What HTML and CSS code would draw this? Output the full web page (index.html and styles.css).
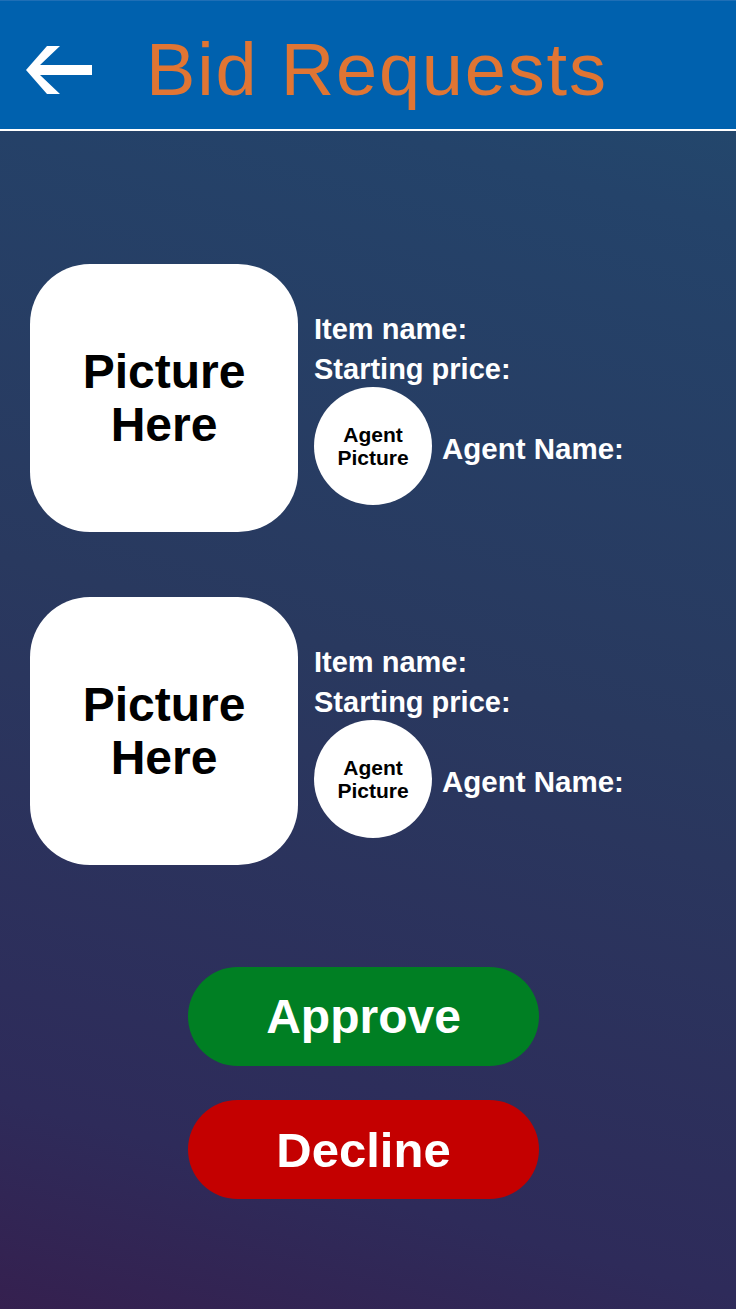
FILE: index.html
```html
<!DOCTYPE html>
<html lang="en">
<head>
<meta charset="utf-8">
<title>Bid Requests</title>
<link rel="stylesheet" href="styles.css">
</head>
<body>
<div class="screen">
  <header class="topbar">
    <svg class="back" width="66" height="48" viewBox="0 0 66 48" aria-label="Back">
      <polygon points="0,24 21,0 34,0 14,19 66,19 66,29 14,29 34,48 21,48" fill="#ffffff"/>
    </svg>
    <h1 class="title">Bid Requests</h1>
  </header>
  <main class="content">
    <section class="requests">
      <article class="request">
        <div class="picture">Picture<br>Here</div>
        <div class="info">
          <div class="line">Item name:</div>
          <div class="line">Starting price:</div>
          <div class="agent">
            <div class="agent-pic">Agent<br>Picture</div>
            <div class="agent-name">Agent Name:</div>
          </div>
        </div>
      </article>
      <article class="request">
        <div class="picture">Picture<br>Here</div>
        <div class="info">
          <div class="line">Item name:</div>
          <div class="line">Starting price:</div>
          <div class="agent">
            <div class="agent-pic">Agent<br>Picture</div>
            <div class="agent-name">Agent Name:</div>
          </div>
        </div>
      </article>
    </section>
    <div class="actions">
      <button class="btn approve">Approve</button>
      <button class="btn decline">Decline</button>
    </div>
  </main>
</div>
</body>
</html>
```
FILE: styles.css
```css
* { box-sizing: border-box; }
html, body {
  margin: 0;
  padding: 0;
}
body {
  font-family: "Liberation Sans", Arial, sans-serif;
  width: 736px;
  height: 1309px;
  overflow: hidden;
}
.screen {
  width: 736px;
  height: 1309px;
  display: flex;
  flex-direction: column;
  background: linear-gradient(195deg, #224c6f 0%, #24436a 15%, #29395f 50%, #2e2b5a 86%, #35204f 100%);
}
.topbar {
  height: 131px;
  flex: none;
  background: #0061ae;
  border-top: 1px solid #1f6fb6;
  border-bottom: 2px solid #ffffff;
  display: flex;
  align-items: center;
  padding: 10px 0 0 26px;
}
.back {
  display: block;
  flex: none;
}
.title {
  margin: 0 0 0 54px;
  font-size: 74px;
  font-weight: normal;
  line-height: 1;
  color: #e07533;
  letter-spacing: 1.8px;
}
.content {
  flex: 1;
  padding: 133px 0 0 30px;
}
.requests {
  display: flex;
  flex-direction: column;
  gap: 65px;
}
.request {
  display: flex;
  gap: 16px;
}
.picture {
  width: 268px;
  height: 268px;
  flex: none;
  border-radius: 60px;
  background: #ffffff;
  color: #000000;
  display: flex;
  align-items: center;
  justify-content: center;
  text-align: center;
  font-size: 48px;
  font-weight: bold;
  line-height: 53px;
}
.info {
  padding-top: 45px;
  color: #ffffff;
  font-weight: bold;
  font-size: 29px;
}
.line {
  line-height: 40px;
  height: 40px;
}
.agent {
  display: flex;
  align-items: center;
  gap: 10px;
  margin-top: -2px;
}
.agent-pic {
  width: 118px;
  height: 118px;
  border-radius: 50%;
  background: #ffffff;
  color: #000000;
  display: flex;
  align-items: center;
  justify-content: center;
  text-align: center;
  font-size: 21px;
  line-height: 23px;
}
.agent-name {
  font-size: 29.5px;
  padding-top: 5px;
}
.actions {
  margin-top: 102px;
  padding-left: 158px;
  display: flex;
  flex-direction: column;
  gap: 34px;
}
.btn {
  width: 351px;
  height: 99px;
  border: none;
  border-radius: 50px;
  color: #ffffff;
  font-family: "Liberation Sans", Arial, sans-serif;
  font-weight: bold;
  font-size: 48px;
  padding: 0;
  display: flex;
  align-items: center;
  justify-content: center;
}
.approve {
  background: #007f23;
}
.decline {
  background: #c40000;
  font-size: 49px;
}
```
